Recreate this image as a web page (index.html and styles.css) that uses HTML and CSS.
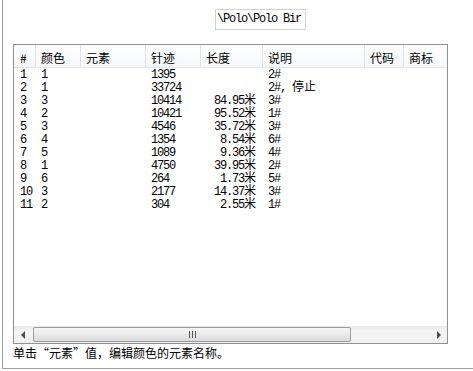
FILE: index.html
```html
<!DOCTYPE html>
<html lang="zh-CN">

<head>
  <meta charset="UTF-8">
  <meta name="viewport" content="width=device-width, initial-scale=1.0">
  <title>颜色元素</title>
  <link rel="stylesheet" href="styles.css">
</head>

<body>
  <div class="group">
    <div class="path">\Polo\Polo Bir</div>

    <div class="list">
      <div class="list-body">
        <table>
          <colgroup>
            <col class="c-num">
            <col class="c-color">
            <col class="c-elem">
            <col class="c-stitch">
            <col class="c-len">
            <col class="c-desc">
            <col class="c-code">
            <col class="c-mark">
          </colgroup>
          <thead>
            <tr>
              <th class="first">#</th>
              <th>颜色</th>
              <th>元素</th>
              <th>针迹</th>
              <th>长度</th>
              <th>说明</th>
              <th>代码</th>
              <th>商标</th>
            </tr>
          </thead>
          <tbody>
            <tr><td class="first">1</td><td>1</td><td></td><td>1395</td><td class="len"></td><td>2#</td><td></td><td></td></tr>
            <tr><td class="first">2</td><td>1</td><td></td><td>33724</td><td class="len"></td><td>2#, <span class="cn">停止</span></td><td></td><td></td></tr>
            <tr><td class="first">3</td><td>3</td><td></td><td>10414</td><td class="len">84.95<span class="cn">米</span></td><td>3#</td><td></td><td></td></tr>
            <tr><td class="first">4</td><td>2</td><td></td><td>10421</td><td class="len">95.52<span class="cn">米</span></td><td>1#</td><td></td><td></td></tr>
            <tr><td class="first">5</td><td>3</td><td></td><td>4546</td><td class="len">35.72<span class="cn">米</span></td><td>3#</td><td></td><td></td></tr>
            <tr><td class="first">6</td><td>4</td><td></td><td>1354</td><td class="len">8.54<span class="cn">米</span></td><td>6#</td><td></td><td></td></tr>
            <tr><td class="first">7</td><td>5</td><td></td><td>1089</td><td class="len">9.36<span class="cn">米</span></td><td>4#</td><td></td><td></td></tr>
            <tr><td class="first">8</td><td>1</td><td></td><td>4750</td><td class="len">39.95<span class="cn">米</span></td><td>2#</td><td></td><td></td></tr>
            <tr><td class="first">9</td><td>6</td><td></td><td>264</td><td class="len">1.73<span class="cn">米</span></td><td>5#</td><td></td><td></td></tr>
            <tr><td class="first">10</td><td>3</td><td></td><td>2177</td><td class="len">14.37<span class="cn">米</span></td><td>3#</td><td></td><td></td></tr>
            <tr><td class="first">11</td><td>2</td><td></td><td>304</td><td class="len">2.55<span class="cn">米</span></td><td>1#</td><td></td><td></td></tr>
          </tbody>
        </table>
      </div>

      <div class="hscroll">
        <span class="arrow left"></span>
        <div class="track">
          <div class="thumb"><span class="grip"></span></div>
        </div>
        <span class="arrow right"></span>
      </div>
    </div>

    <p class="status">单击<span class="q open">“</span>元素<span class="q close">”</span>值，编辑颜色的元素名称。</p>
  </div>
</body>

</html>
```

FILE: styles.css
```css
* {
  box-sizing: border-box;
}

body {
  margin: 0;
  background: #fff;
  color: #000;
  font-family: "Noto Sans CJK SC", sans-serif;
  font-size: 12px;
}

.group {
  margin-left: 2px;
  height: 369px;
  padding-left: 10px;
  border-left: 1px solid #a0a0a0;
  border-bottom: 1px solid #a0a0a0;
  overflow: hidden;
}

.path {
  width: 91px;
  height: 21px;
  margin: 9px 0 0 202px;
  padding-left: 1px;
  border: 1px solid #d2d2d2;
  font-family: "Liberation Mono", monospace;
  font-size: 12px;
  letter-spacing: -1.2px;
  line-height: 19px;
  white-space: nowrap;
}

.list {
  width: 435px;
  height: 300px;
  margin-top: 14px;
  border: 1px solid #8e9093;
  display: flex;
  flex-direction: column;
}

.list-body {
  flex: 1;
  overflow: hidden;
}

table {
  width: 433px;
  table-layout: fixed;
  border-collapse: collapse;
}

.c-num { width: 22px; }
.c-color { width: 45px; }
.c-elem { width: 65px; }
.c-stitch { width: 55px; }
.c-len { width: 62px; }
.c-desc { width: 102px; }
.c-code { width: 39px; }
.c-mark { width: 43px; }

th {
  height: 23px;
  padding: 3px 0 0 5px;
  font-weight: normal;
  text-align: left;
  line-height: 18px;
  background: linear-gradient(#ffffff, #f5f7fa);
  box-shadow: inset -1px 0 #dfe2e7, inset 0 -1px #e3e4e6;
  white-space: nowrap;
  overflow: hidden;
}

th:last-child {
  box-shadow: inset 0 -1px #e3e4e6;
}

td {
  height: 13px;
  padding: 0 0 0 5px;
  font-family: "Liberation Mono", "Noto Sans CJK SC", monospace;
  font-size: 12px;
  letter-spacing: -1.2px;
  line-height: 13px;
  white-space: nowrap;
}

tbody tr:first-child td {
  height: 14px;
  padding-top: 1px;
}

.first {
  padding-left: 6px;
}

td.len {
  text-align: right;
  padding-left: 0;
  padding-right: 7px;
}

.cn {
  letter-spacing: 0;
}

.hscroll {
  height: 17px;
  display: flex;
  align-items: center;
  background: linear-gradient(#e8e8e8, #f4f4f4 30%, #f1f1f1);
}

.arrow {
  width: 17px;
  height: 17px;
  display: flex;
  align-items: center;
  justify-content: center;
}

.arrow::before {
  content: "";
  border-top: 4px solid transparent;
  border-bottom: 4px solid transparent;
}

.arrow.left::before {
  border-right: 4px solid #4a4a4a;
}

.arrow.right::before {
  border-left: 4px solid #4a4a4a;
}

.track {
  flex: 1;
  height: 17px;
  display: flex;
  align-items: center;
}

.thumb {
  width: 318px;
  height: 15px;
  margin-left: 2px;
  border: 1px solid #9b9b9b;
  border-radius: 2px;
  background: linear-gradient(#f6f6f6, #e9e9e9 50%, #d9d9d9);
  display: flex;
  align-items: center;
  justify-content: center;
}

.grip {
  width: 7px;
  height: 7px;
  background: repeating-linear-gradient(90deg, #5a5a5a 0 1px, #e0e0e0 1px 2px, transparent 2px 3px);
}

.status {
  margin: 2px 0 0;
  line-height: 14px;
  white-space: nowrap;
}

.q {
  display: inline-block;
  width: 12px;
}

.q.open {
  text-align: right;
}

.q.close {
  text-align: left;
}
```
